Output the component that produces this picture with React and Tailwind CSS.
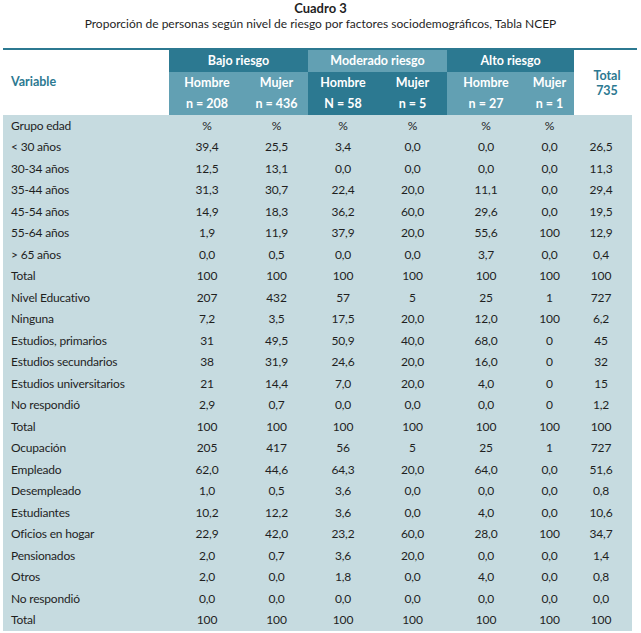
const groups = [
  { label: "Bajo riesgo", top: "dark", sub: [["Hombre", "n = 208"], ["Mujer", "n = 436"]] },
  { label: "Moderado riesgo", top: "light", sub: [["Hombre", "N = 58"], ["Mujer", "n = 5"]] },
  { label: "Alto riesgo", top: "dark", sub: [["Hombre", "n = 27"], ["Mujer", "n = 1"]] },
];

const rows = [
  ["Grupo edad", "%", "%", "%", "%", "%", "%", ""],
  ["< 30 años", "39,4", "25,5", "3,4", "0,0", "0,0", "0,0", "26,5"],
  ["30-34 años", "12,5", "13,1", "0,0", "0,0", "0,0", "0,0", "11,3"],
  ["35-44 años", "31,3", "30,7", "22,4", "20,0", "11,1", "0,0", "29,4"],
  ["45-54 años", "14,9", "18,3", "36,2", "60,0", "29,6", "0,0", "19,5"],
  ["55-64 años", "1,9", "11,9", "37,9", "20,0", "55,6", "100", "12,9"],
  ["> 65 años", "0,0", "0,5", "0,0", "0,0", "3,7", "0,0", "0,4"],
  ["Total", "100", "100", "100", "100", "100", "100", "100"],
  ["Nivel Educativo", "207", "432", "57", "5", "25", "1", "727"],
  ["Ninguna", "7,2", "3,5", "17,5", "20,0", "12,0", "100", "6,2"],
  ["Estudios, primarios", "31", "49,5", "50,9", "40,0", "68,0", "0", "45"],
  ["Estudios secundarios", "38", "31,9", "24,6", "20,0", "16,0", "0", "32"],
  ["Estudios universitarios", "21", "14,4", "7,0", "20,0", "4,0", "0", "15"],
  ["No respondió", "2,9", "0,7", "0,0", "0,0", "0,0", "0", "1,2"],
  ["Total", "100", "100", "100", "100", "100", "100", "100"],
  ["Ocupación", "205", "417", "56", "5", "25", "1", "727"],
  ["Empleado", "62,0", "44,6", "64,3", "20,0", "64,0", "0,0", "51,6"],
  ["Desempleado", "1,0", "0,5", "3,6", "0,0", "0,0", "0,0", "0,8"],
  ["Estudiantes", "10,2", "12,2", "3,6", "0,0", "4,0", "0,0", "10,6"],
  ["Oficios en hogar", "22,9", "42,0", "23,2", "60,0", "28,0", "100", "34,7"],
  ["Pensionados", "2,0", "0,7", "3,6", "20,0", "0,0", "0,0", "1,4"],
  ["Otros", "2,0", "0,0", "1,8", "0,0", "4,0", "0,0", "0,8"],
  ["No respondió", "0,0", "0,0", "0,0", "0,0", "0,0", "0,0", "0,0"],
  ["Total", "100", "100", "100", "100", "100", "100", "100"],
];

const widths = ["w-[166px]", "w-[76px]", "w-[63px]", "w-[70px]", "w-[69px]", "w-[78px]", "w-[49px]", "w-[58px]"];

const bg = (tone) => (tone === "dark" ? "bg-[#2c7991]" : "bg-[#62a0b3]");
const flip = (tone) => (tone === "dark" ? "light" : "dark");

export default function App() {
  return (
    <div className="bg-white w-[641px] h-[633px] text-[#1f1f1f]" style={{ fontFamily: "Lato, 'Open Sans', sans-serif" }}>
      <div className="pt-[2px] text-center leading-[13px] flex flex-col gap-[2px]">
        <div className="font-bold text-[13px]">Cuadro 3</div>
        <div className="text-[12px]">
          Proporción de personas según nivel de riesgo por factores sociodemográficos, Tabla NCEP
        </div>
      </div>
      <div className="ml-[3px] mt-[18px] w-[634px] border-t-2 border-[#2c7991]">
        <table className="table-fixed border-collapse w-[629px]">
          <colgroup>
            {widths.map((w, i) => (
              <col key={i} className={w} />
            ))}
          </colgroup>
          <thead className="font-bold text-[12.5px]">
            <tr className="h-[22px]">
              <th rowSpan={3} className="text-left pl-[8px] text-[#2c7991] align-middle">
                Variable
              </th>
              {groups.map((g) => (
                <th key={g.label} colSpan={2} className={`${bg(g.top)} text-white`}>
                  {g.label}
                </th>
              ))}
              <th rowSpan={3} className="text-[#2c7991] leading-[15px] pl-[8px]">
                Total
                <br />
                735
              </th>
            </tr>
            <tr className="h-[22px]">
              {groups.map((g) =>
                g.sub.map(([s], i) => (
                  <th key={g.label + i} className={`${bg(flip(g.top))} text-white`}>
                    {s}
                  </th>
                ))
              )}
            </tr>
            <tr className="h-[21px]">
              {groups.map((g) =>
                g.sub.map(([, n], i) => (
                  <th key={g.label + n} className={`${bg(flip(g.top))} text-white`}>
                    {n}
                  </th>
                ))
              )}
            </tr>
          </thead>
          <tbody className="bg-[#c6dbe0] text-[12px] tracking-[-0.2px]">
            {rows.map((r, ri) => (
              <tr key={ri} className="h-[21.5px]">
                {r.map((c, ci) =>
                  ci === 0 ? (
                    <td key={ci} className="pl-[8px] text-left whitespace-nowrap">
                      {c}
                    </td>
                  ) : (
                    <td key={ci} className={`text-center ${ci === 7 ? "pr-[4px]" : ""}`}>
                      {c}
                    </td>
                  )
                )}
              </tr>
            ))}
          </tbody>
        </table>
      </div>
    </div>
  );
}
